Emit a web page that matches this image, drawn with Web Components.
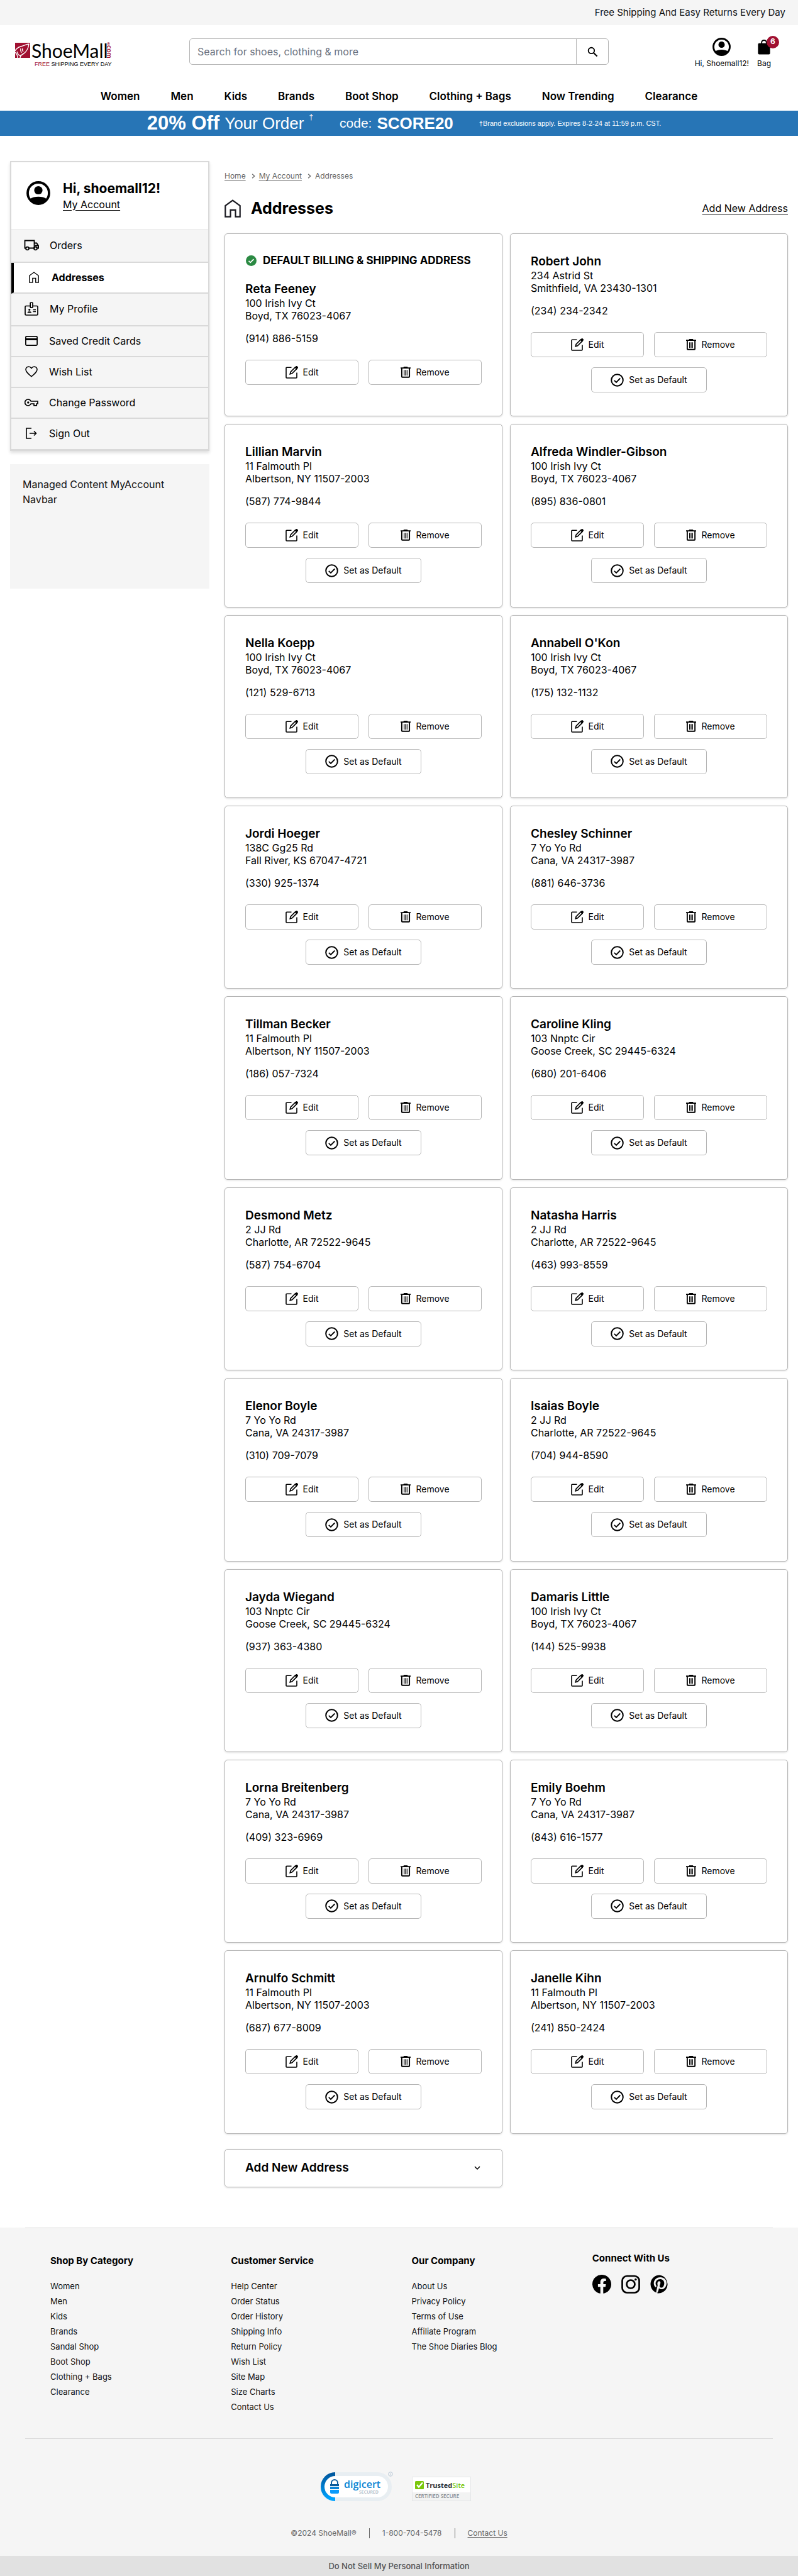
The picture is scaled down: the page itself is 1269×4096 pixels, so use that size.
<!DOCTYPE html>
<html lang="en">
<head>
<meta charset="utf-8">
<meta name="viewport" content="width=device-width, initial-scale=1">
<title>ShoeMall - Addresses</title>
<style>
  :root { --line: #d9d9d9; --edge: #b5b5b5; --panel: #f5f5f5; --muted: #666; --brand: #a01031; }
  body { margin: 0; background: #fff; color: #000; font: 16px/20px Inter, "Open Sans", sans-serif; }
</style>
</head>
<body>
<shop-page></shop-page>
<script>
const BASE = `
  *, *::before, *::after { box-sizing: border-box; }
  :host { display: block; }
  a { color: inherit; text-decoration: none; }
  button { font: inherit; color: inherit; background: none; border: 0; padding: 0; cursor: pointer; }
  ul, h1, h2, p { margin: 0; padding: 0; list-style: none; }
`;

function define(name, css, html) {
  customElements.define(name, class extends HTMLElement {
    constructor() { super(); this.attachShadow({ mode: 'open' }); }
    connectedCallback() {
      this.shadowRoot.innerHTML = `<style>${BASE}${css}</style>${typeof html === 'function' ? html(this) : html}`;
    }
  });
}

const ICONS = {
  user: ['0 0 38 38', '<circle cx="19" cy="19" r="17" fill="none" stroke="currentColor" stroke-width="3.8"/><circle cx="19" cy="14.5" r="6.6"/><path d="M5.5 28.5C9 25.8 14 24.8 19 24.8s10 1 13.500 3.700A17.500 17.500 0 0 1 5.500 28.500z"/>'],
  bag: ['0 0 20 26', '<path d="M2 7h3V6a5 5 0 0 1 10 0v1h3a2 2 0 0 1 2 2v14.500a2 2 0 0 1-2 2H2a2 2 0 0 1-2-2V9a2 2 0 0 1 2-2zm5 0h6V6a3 3 0 0 0-6 0z"/>'],
  search: ['0 0 18 18', '<circle cx="6.800" cy="6.800" r="5" fill="none" stroke="currentColor" stroke-width="2"/><path d="M10.500 10.500l6 6" stroke="currentColor" stroke-width="2.200"/>'],
  truck: ['0 0 24 18', '<g fill="none" stroke="currentColor" stroke-width="1.800"><path d="M3.500 13.500H1.500V1.500h15v12H8M16.500 5.500h3.800l2.800 4.200v3.800h-2M14 13.500h2.500"/><circle cx="5.500" cy="14" r="2.400"/><circle cx="18.500" cy="14" r="2.400"/></g><path d="M17.500 8.500h5.500v2h-5.500z"/>'],
  home: ['0 0 26 29', '<path d="M1.300 27.600V10L13 1.600 24.700 10v17.600h-7.200V16.800h-8v10.800z" fill="none" stroke="currentColor" stroke-width="2.200"/>'],
  badge: ['0 0 22 22', '<g fill="none" stroke="currentColor" stroke-width="1.700"><path d="M9 6.500H2.500a1.500 1.500 0 0 0-1.500 1.500v11.500A1.500 1.500 0 0 0 2.500 21h17a1.500 1.500 0 0 0 1.500-1.500V8a1.500 1.500 0 0 0-1.500-1.500H13"/><rect x="9.200" y="1" width="3.800" height="8.200" rx="1"/><path d="M13.500 12.500h4.500M13.500 15.500h4.500" stroke-width="1.300"/></g><circle cx="7.800" cy="12.500" r="1.600"/><path d="M4.500 17.500c0-1.600 1.500-2.200 3.300-2.200s3.300.6 3.300 2.200z"/>'],
  card: ['0 0 20 16', '<rect x=".9" y=".9" width="18.200" height="14.200" rx="1.300" fill="none" stroke="currentColor" stroke-width="1.700"/><path d="M1 4h18v3H1z"/>'],
  heart: ['0 0 20 18', '<path d="M10 16.800C3.500 11.300 1 8.800 1 5.600A4.500 4.500 0 0 1 5.500 1C7.400 1 9 2 10 3.600 11 2 12.600 1 14.500 1A4.500 4.500 0 0 1 19 5.600c0 3.200-2.500 5.700-9 11.200z" fill="none" stroke="currentColor" stroke-width="1.500"/>'],
  key: ['0 0 22 12', '<path d="M10.200 4A5 5 0 1 0 10.200 8H14v0h1v2.800h4.200V8H21V4z" fill="none" stroke="currentColor" stroke-width="1.700"/><circle cx="5.800" cy="6" r="1.700"/>'],
  exit: ['0 0 18 18', '<path d="M9 1H1v16h8M6 9h10.500M13 5.500L16.500 9 13 12.500" fill="none" stroke="currentColor" stroke-width="1.600"/>'],
  edit: ['0 0 20 20', '<path d="M9.500 2.200H2a1 1 0 0 0-1 1V18a1 1 0 0 0 1 1h15a1 1 0 0 0 1-1v-7.500" fill="none" stroke="currentColor" stroke-width="1.600"/><path d="M7.300 12.700l.8-3.300L15.500 2l2.400 2.400-7.400 7.400z" fill="none" stroke="currentColor" stroke-width="1.700"/><path d="M14.600 2.300L16.500.5a1.600 1.600 0 0 1 2.300 0l.7.7a1.600 1.600 0 0 1 0 2.300l-1.800 1.900z"/>'],
  trash: ['0 0 17 19', '<path d="M5.500 0h6l.8 1.200H17v2H0v-2h4.700z"/><path d="M2 3v13.800c0 .6.400 1 1 1h11c.6 0 1-.4 1-1V3" fill="none" stroke="currentColor" stroke-width="2"/><path d="M6 5.500v9.500M8.500 5.500v9.500M11 5.500v9.500" stroke="currentColor" stroke-width="1.300"/>'],
  check: ['0 0 21 21', '<circle cx="10.500" cy="10.500" r="9.300" fill="none" stroke="currentColor" stroke-width="2"/><path d="M5.800 10.800l3.200 3.100 6.300-6.400" fill="none" stroke="currentColor" stroke-width="1.800"/>'],
  checked: ['0 0 17 17', '<circle cx="8.500" cy="8.500" r="8.500"/><path d="M4.500 8.800l2.700 2.600 5.200-5.300" fill="none" stroke="#fff" stroke-width="1.700"/>'],
  right: ['0 0 6 8', '<path d="M1.200.8L4.600 4 1.200 7.200" fill="none" stroke="currentColor" stroke-width="1.400"/>'],
  down: ['0 0 10 6', '<path d="M1 1l4 4 4-4" fill="none" stroke="currentColor" stroke-width="1.500"/>'],
  facebook: ['0 0 30 30', '<path d="M30 15a15 15 0 1 0-17.300 14.800V19.300H8.900V15h3.800v-3.300c0-3.800 2.200-5.800 5.700-5.800 1.600 0 3.300.3 3.300.3v3.700h-1.900c-1.800 0-2.400 1.200-2.400 2.300V15h4.100l-.7 4.300h-3.500v10.500A15 15 0 0 0 30 15z"/>'],
  instagram: ['0 0 30 30', '<rect x="1.500" y="2" width="27" height="26.500" rx="7.500" fill="none" stroke="currentColor" stroke-width="2.700"/><circle cx="15" cy="15" r="6.500" fill="none" stroke="currentColor" stroke-width="2.700"/><circle cx="22.800" cy="7.500" r="1.800"/>'],
  pinterest: ['0 0 30 30', '<path d="M15 .5A14.500 14.500 0 0 0 9.700 28.500c-.1-1.200 0-2.800.3-4l1.900-8s-.5-1-.5-2.400c0-2.200 1.300-3.900 2.900-3.900 1.400 0 2 1 2 2.200 0 1.400-.9 3.400-1.300 5.300-.4 1.600.8 2.900 2.300 2.900 2.800 0 5-3 5-7.200 0-3.800-2.700-6.400-6.600-6.400-4.500 0-7.100 3.400-7.100 6.800 0 1.400.5 2.800 1.200 3.600.1.200.1.300.1.500l-.5 1.800c-.1.300-.2.400-.5.200-2-.9-3.200-3.800-3.200-6.200 0-5 3.700-9.700 10.500-9.700 5.500 0 9.800 3.900 9.800 9.200 0 5.500-3.500 9.900-8.300 9.900-1.600 0-3.100-.8-3.700-1.800l-1 3.800c-.4 1.400-1.300 3.100-2 4.200A14.500 14.500 0 1 0 15 .5z"/>']
};
define('ui-icon', ':host{display:inline-flex;flex:none} svg{display:block;fill:currentColor}', el => {
  const [box, body] = ICONS[el.getAttribute('name')];
  return `<svg viewBox="${box}" width="${el.getAttribute('w')}" height="${el.getAttribute('h')}" aria-hidden="true">${body}</svg>`;
});
const icon = (name, w, h) => `<ui-icon name="${name}" w="${w}" h="${h}"></ui-icon>`;

define('promo-bar', `
  :host { background: var(--panel); padding: 0 20px; text-align: right; font-size: 15px; line-height: 39px; height: 40px; color: #111; }
`, `<slot></slot>`);

define('shop-logo', `svg{display:block;overflow:visible}`, `
  <a href="#" aria-label="ShoeMall home"><svg width="164" height="58" viewBox="0 -12 164 58">
    <rect x="0" y="3" width="24" height="24" fill="#a01031"/>
    <path d="M0 16c2-4 5-6 9-7 5-1 9-4 13-4-1 7-4 12-8 15-4 2-6 4-6 7M0 18c2 2 4 5 4 9M3 17c1 4 3 7 6 6M9 12c-1 3 0 5 1 7M12 12c-1 3 0 4 1 5" fill="none" stroke="#fff" stroke-width="1.400"/>
    <text x="26" y="27" font-family="Lato" font-size="30" fill="#000">ShoeMall</text>
    <text transform="translate(146 2) rotate(90)" font-family="Lato" font-size="11" font-weight="700" fill="#a01031"><tspan font-size="6">®</tspan>com</text>
    <text x="31" y="40" font-family="Liberation Sans" font-size="9" fill="#000"><tspan fill="#a01031">FREE</tspan> SHIPPING EVERY DAY</text>
  </svg></a>`);

define('search-box', `
  form { display: flex; height: 42px; border: 1px solid var(--edge); border-radius: 5px; overflow: hidden; background: #fff; }
  input { flex: 1; min-width: 0; border: 0; outline: 0; padding: 0 12px; font: inherit; background: none; }
  input::placeholder { color: #6b7280; opacity: 1; }
  button { width: 51px; border-left: 1px solid var(--edge); display: grid; place-items: center; }
`, `<form><input type="search" aria-label="Search" placeholder="Search for shoes, clothing &amp; more"><button type="button" aria-label="Search">${icon('search', 17, 17)}</button></form>`);

define('account-links', `
  :host { display: flex; gap: 13px; font-size: 12px; line-height: 16px; padding-top: 4px; }
  a { display: flex; flex-direction: column; align-items: center; gap: 4px; }
  .pic { position: relative; height: 29px; display: flex; align-items: center; }
  .count { position: absolute; left: 14px; top: -3px; width: 20px; height: 20px; border-radius: 50%; background: var(--brand); color: #fff; font-size: 12px; font-weight: 700; line-height: 18px; text-align: center; }
`, `<a href="#"><span class="pic">${icon('user', 29, 29)}</span><span>Hi, Shoemall12!</span></a>
    <a href="#"><span class="pic">${icon('bag', 20, 25)}<span class="count">6</span></span><span>Bag</span></a>`);

define('site-header', `
  :host { padding-top: 18px; }
  .row { display: grid; grid-template: 48px / 277px minmax(200px, 667px) 1fr; align-items: center; padding: 0 43px 0 24px; }
  account-links { justify-self: end; }
  nav { display: flex; justify-content: center; gap: 49px; padding: 37px 0 13px; font-size: 17px; font-weight: 600; line-height: 20px; }
`, `<div class="row"><shop-logo></shop-logo><search-box></search-box><account-links></account-links></div>
  <nav>${['Women', 'Men', 'Kids', 'Brands', 'Boot Shop', 'Clothing + Bags', 'Now Trending', 'Clearance'].map(t => `<a href="#">${t}</a>`).join('')}</nav>`);

define('sale-banner', `
  a { display: flex; justify-content: center; align-items: center; height: 40px; background: #2775b6; color: #fff; font-family: "Liberation Sans", Arial, sans-serif; font-size: 26px; line-height: 40px; padding-left: 16px; white-space: nowrap; }
  .off { font-size: 31px; font-weight: 700; margin-right: 8px; }
  sup { font-size: 12px; line-height: 20px; align-self: flex-start; margin: 0 42px 0 8px; }
  .code { font-size: 21px; margin-right: 8px; }
  .fine { font-size: 11px; margin-left: 41px; }
`, `<a href="#"><span class="off">20% Off</span><span>Your Order</span><sup>†</sup><span class="code">code:</span><b>SCORE20</b><span class="fine">†Brand exclusions apply. Expires 8-2-24 at 11:59 p.m. CST.</span></a>`);

const MENU = [
  ['truck', 24, 18, 'Orders', 'tall'], ['home', 16, 18, 'Addresses', 'on'], ['badge', 22, 22, 'My Profile', 'tall'],
  ['card', 20, 16, 'Saved Credit Cards', ''], ['heart', 20, 18, 'Wish List', ''], ['key', 22, 12, 'Change Password', ''], ['exit', 18, 18, 'Sign Out', '']
];
define('account-menu', `
  .box { border: 2px solid var(--line); box-shadow: 0 3px 5px #0002; }
  .who { display: flex; align-items: center; gap: 20px; height: 108px; padding: 0 24px 9px; border-bottom: 1px solid var(--line); }
  .who div { padding-top: 9px; }
  .who b { display: block; font-size: 21px; line-height: 26px; }
  .who a { text-decoration: underline; font-size: 16px; line-height: 24px; text-underline-offset: 3px; }
  li a { display: flex; align-items: center; gap: 16px; height: 49px; padding: 0 20px 2px; background: var(--panel); border-bottom: 2px solid var(--line); }
  li a.tall { height: 52px; gap: 17px; }
  li a.on { background: #fff; font-weight: 700; border-left: 4px solid #000; }
  li:last-child a { border-bottom-width: 1px; }
  .i { width: 24px; display: flex; justify-content: center; }
`, `<div class="box"><div class="who">${icon('user', 38, 38)}<div><b>Hi, shoemall12!</b><a href="#">My Account</a></div></div>
  <nav aria-label="Account"><ul>${MENU.map(([n, w, h, t, c]) => `<li><a href="#" class="${c}"><span class="i">${icon(n, w, h)}</span>${t}</a></li>`).join('')}</ul></nav></div>`);

define('managed-note', `
  :host { background: var(--panel); min-height: 198px; padding: 20px; line-height: 24px; color: #111; }
`, `<slot></slot>`);

define('bread-crumbs', `
  nav { display: flex; align-items: center; gap: 6px; color: var(--muted); font-size: 12px; line-height: 16px; }
  a { text-decoration: underline; text-underline-offset: 3px; margin-right: 3px; }
`, `<nav aria-label="Breadcrumb"><a href="#">Home</a>${icon('right', 6, 8)}<a href="#">My Account</a>${icon('right', 6, 8)}<span>Addresses</span></nav>`);

define('outline-button', `
  button { display: flex; align-items: center; justify-content: center; gap: 8px; width: 100%; height: 40px; border: 1px solid var(--edge); border-radius: 5px; background: #fff; font-size: 14px; line-height: 20px; }
`, `<button type="button"><slot></slot></button>`);

define('address-card', `
  :host { border: 1px solid var(--edge); border-radius: 5px; padding: 32px 32px 0; box-shadow: 0 1px 3px #0002; background: #fff; aspect-ratio: 446 / 294; }
  .flag { display: flex; align-items: center; gap: 10px; margin-bottom: 24px; font-weight: 700; font-size: 17px; line-height: 20px; white-space: nowrap; }
  .flag ui-icon { color: #2b8a43; margin-left: 1px; }
  h2 { font-size: 19px; font-weight: 600; line-height: 24px; }
  .tel { margin-top: 16px; }
  .tools { display: grid; grid-template-columns: 1fr 1fr; gap: 16px; margin-top: 24px; }
  .set { grid-column: 1 / -1; justify-self: center; width: 184px; }
`, el => `${el.hasAttribute('primary') ? `<div class="flag">${icon('checked', 17, 17)}DEFAULT BILLING &amp; SHIPPING ADDRESS</div>` : ''}
  <h2><slot name="name"></slot></h2><p><slot name="street"></slot></p><p><slot name="city"></slot></p><p class="tel"><slot name="tel"></slot></p>
  <div class="tools"><outline-button>${icon('edit', 20, 20)}Edit</outline-button><outline-button>${icon('trash', 16, 18)}Remove</outline-button>
  ${el.hasAttribute('primary') ? '' : `<outline-button class="set">${icon('check', 21, 21)}Set as Default</outline-button>`}</div>`);

const IVY = ['100 Irish Ivy Ct', 'Boyd, TX 76023-4067'], FAL = ['11 Falmouth Pl', 'Albertson, NY 11507-2003'], YO = ['7 Yo Yo Rd', 'Cana, VA 24317-3987'],
  NN = ['103 Nnptc Cir', 'Goose Creek, SC 29445-6324'], JJ = ['2 JJ Rd', 'Charlotte, AR 72522-9645'];
const PEOPLE = [
  ['Reta Feeney', IVY, '(914) 886-5159'], ['Robert John', ['234 Astrid St', 'Smithfield, VA 23430-1301'], '(234) 234-2342'],
  ['Lillian Marvin', FAL, '(587) 774-9844'], ['Alfreda Windler-Gibson', IVY, '(895) 836-0801'],
  ['Nella Koepp', IVY, '(121) 529-6713'], ["Annabell O'Kon", IVY, '(175) 132-1132'],
  ['Jordi Hoeger', ['138C Gg25 Rd', 'Fall River, KS 67047-4721'], '(330) 925-1374'], ['Chesley Schinner', YO, '(881) 646-3736'],
  ['Tillman Becker', FAL, '(186) 057-7324'], ['Caroline Kling', NN, '(680) 201-6406'],
  ['Desmond Metz', JJ, '(587) 754-6704'], ['Natasha Harris', JJ, '(463) 993-8559'],
  ['Elenor Boyle', YO, '(310) 709-7079'], ['Isaias Boyle', JJ, '(704) 944-8590'],
  ['Jayda Wiegand', NN, '(937) 363-4380'], ['Damaris Little', IVY, '(144) 525-9938'],
  ['Lorna Breitenberg', YO, '(409) 323-6969'], ['Emily Boehm', YO, '(843) 616-1577'],
  ['Arnulfo Schmitt', FAL, '(687) 677-8009'], ['Janelle Kihn', FAL, '(241) 850-2424']
];
define('address-book', `
  header { display: flex; align-items: center; gap: 16px; padding: 28px 0 25px; height: 83px; }
  header ui-icon { color: #1b1b22; }
  h1 { flex: 1; font-size: 25px; font-weight: 700; line-height: 30px; }
  header a { text-decoration: underline; text-underline-offset: 3px; }
  .grid { display: grid; grid-template-columns: 1fr 1fr; gap: 12px; }
  .add { grid-column: 1; margin-top: 12px; display: flex; justify-content: space-between; align-items: center; height: 61px; padding: 0 34px 0 32px; border: 1px solid var(--edge); border-radius: 5px; box-shadow: 0 1px 3px #0002; font-size: 19px; font-weight: 600; text-align: left; }
`, `<bread-crumbs></bread-crumbs><header>${icon('home', 26, 29)}<h1>Addresses</h1><a href="#">Add New Address</a></header>
  <div class="grid">${PEOPLE.map(([n, a, t], i) => `<address-card ${i ? '' : 'primary'}><span slot="name">${n}</span><span slot="street">${a[0]}</span><span slot="city">${a[1]}</span><span slot="tel">${t}</span></address-card>`).join('')}
  <button class="add" type="button" aria-expanded="false">Add New Address${icon('down', 10, 6)}</button></div>`);

define('link-column', `
  h2 { font-size: 15px; font-weight: 700; line-height: 20px; margin-bottom: 18px; }
  li { font-size: 13px; line-height: 24px; color: #111; }
`, el => `<h2>${el.getAttribute('heading')}</h2><ul>${el.getAttribute('links').split('|').map(t => `<li><a href="#">${t}</a></li>`).join('')}</ul>`);

define('social-column', `
  h2 { font-size: 15px; font-weight: 700; line-height: 20px; margin: -4px 0 16px; }
  div { display: flex; gap: 16px; }
`, `<h2>Connect With Us</h2><div>${['facebook', 'instagram', 'pinterest'].map(n => `<a href="#" aria-label="${n}">${icon(n, 30, 30)}</a>`).join('')}</div>`);

define('trust-seals', `
  :host { display: flex; justify-content: center; align-items: flex-end; gap: 30px; }
  svg { display: block; }
`, `<svg width="115" height="47" viewBox="0 0 115 47">
    <defs><linearGradient id="g" x1="0" y1="0" x2="0" y2="1"><stop offset="0" stop-color="#0059a0"/><stop offset="1" stop-color="#00a3ff"/></linearGradient></defs>
    <rect x="3" y="4" width="107" height="40" rx="20" fill="#fff" stroke="#e8eef2" stroke-width="6"/>
    <path d="M23 4a20 20 0 0 0 0 40" fill="none" stroke="url(#g)" stroke-width="6"/>
    <path d="M17 22v-4a5 5 0 0 1 10 0v4" fill="none" stroke="#0b5a9c" stroke-width="2"/>
    <path d="M15 20h14v3H15z" fill="#0b5a9c"/><path d="M15 24h14v4H15z" fill="#0b84d8"/><path d="M15 29h14v4a2 2 0 0 1-2 2H17a2 2 0 0 1-2-2z" fill="#0a9bfb"/>
    <text x="37" y="26" font-family="Open Sans" font-weight="600" font-size="16" fill="#0a85d4">digicert</text>
    <text x="61" y="35" font-family="Open Sans" font-weight="600" font-size="7" fill="#aab7c2">SECURED</text>
    <circle cx="111" cy="4" r="3.300" fill="none" stroke="#b8c8d6"/><path d="M111 2.500v3.200" stroke="#b8c8d6"/>
  </svg>
  <svg width="94" height="39" viewBox="0 0 94 39">
    <rect x=".5" y=".5" width="93" height="38" fill="#fff" stroke="#e4e6e7"/><path d="M1 25h92v13H1z" fill="#f2f3f3"/>
    <rect x="5" y="7" width="14" height="13" rx="1.500" fill="#7ac70c"/><path d="M8 13l3 3.500 6-7" fill="none" stroke="#fff" stroke-width="2.200"/>
    <text x="22" y="18" font-family="Open Sans" font-weight="700" font-size="11" fill="#2d3338">Trusted<tspan fill="#7ac70c" font-weight="600">Site</tspan></text>
    <text x="5" y="34" font-family="Open Sans" font-weight="600" font-size="8" fill="#8a8f94">CERTIFIED SECURE</text>
  </svg>`);

define('site-footer', `
  :host { background: var(--panel); }
  .in { margin: 0 40px; }
  .cols { display: grid; grid-template-columns: repeat(4, 1fr); padding: 42px 0 38px 40px; border: solid var(--line); border-width: 1px 0; }
  trust-seals { padding: 52px 10px 43px 0; }
  .legal { display: flex; justify-content: center; gap: 20px; font-size: 12px; line-height: 16px; color: var(--muted); padding: 0 0 28px; }
  .legal * + * { border-left: 1px solid var(--muted); padding-left: 20px; }
  .legal a { text-decoration: underline; text-underline-offset: 2px; }
  .sell { display: block; background: #e1e1e1; color: #555; text-align: center; font-size: 13px; font-weight: 500; line-height: 32px; padding-bottom: 2px; }
`, `<footer><div class="in"><div class="cols">
    <link-column heading="Shop By Category" links="Women|Men|Kids|Brands|Sandal Shop|Boot Shop|Clothing + Bags|Clearance"></link-column>
    <link-column heading="Customer Service" links="Help Center|Order Status|Order History|Shipping Info|Return Policy|Wish List|Site Map|Size Charts|Contact Us"></link-column>
    <link-column heading="Our Company" links="About Us|Privacy Policy|Terms of Use|Affiliate Program|The Shoe Diaries Blog"></link-column>
    <social-column></social-column></div>
    <trust-seals></trust-seals>
    <div class="legal"><span>©2024 ShoeMall®</span><span>1-800-704-5478</span><a href="#">Contact Us</a></div></div>
    <a class="sell" href="#">Do Not Sell My Personal Information</a></footer>`);

define('shop-page', `
  .main { display: grid; grid-template-columns: 317px minmax(0, 1fr); gap: 24px; align-items: start; padding: 40px 16px 64px; }
  managed-note { margin-top: 21px; }
  address-book { padding-top: 16px; }
`, `<promo-bar>Free Shipping And Easy Returns Every Day</promo-bar><site-header></site-header><sale-banner></sale-banner>
  <div class="main"><aside><account-menu></account-menu><managed-note>Managed Content MyAccount Navbar</managed-note></aside><address-book></address-book></div>
  <site-footer></site-footer>`);
</script>
</body>
</html>
